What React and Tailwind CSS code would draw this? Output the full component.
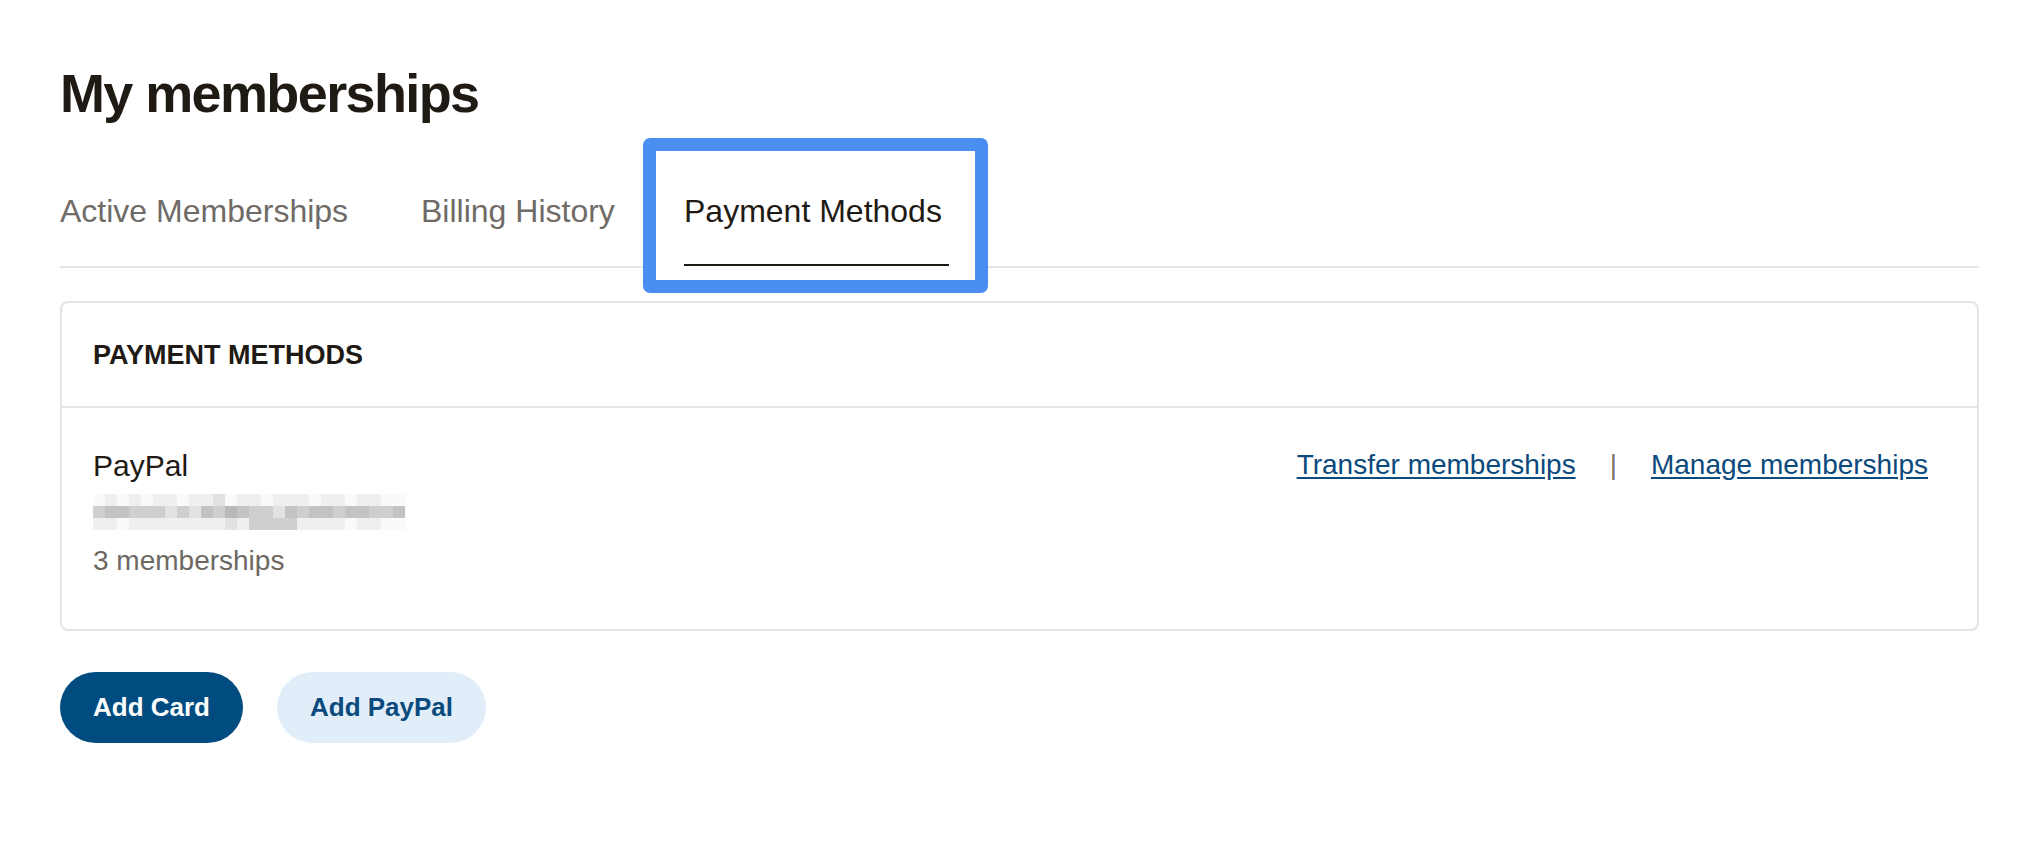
const shade = {
  a: "bg-[#fafafa]",
  b: "bg-[#efefef]",
  c: "bg-[#e2e2e2]",
  d: "bg-[#cfcfcf]",
  e: "bg-[#c3c3c3]",
  f: "bg-[#b8b8b8]",
};

// pixelated (redacted) e-mail line
const blurRows = [
  "abababbabbcabbabbbabbabbaa",
  "deedddcdcedfeddcedeedeedde",
  "bbabbbbbbbbcbddddbbbbabbaa",
];

function Redacted() {
  return (
    <div className="mt-[10px] flex flex-col">
      {blurRows.map((row, i) => (
        <div key={i} className="flex">
          {row.split("").map((c, j) => (
            <div key={j} className={`h-[12px] w-[12px] ${shade[c]}`} />
          ))}
        </div>
      ))}
    </div>
  );
}

function Tab({ label, width }) {
  return (
    <div className={width}>
      <div className="pb-[33px] border-b-2 border-transparent text-[32px] leading-[40px] text-[#6f6b66]">
        {label}
      </div>
    </div>
  );
}

export default function App() {
  return (
    <div className="min-h-[846px] bg-white pl-[60px] pr-[45px] pt-[61px] font-['Liberation_Sans',Arial,sans-serif]">
      <h1 className="text-[54px] leading-[64px] font-bold tracking-[-0.03em] text-[#1f1a13]">
        My memberships
      </h1>

      {/* Tabs */}
      <div className="mt-[66px] flex gap-[64px] border-b-2 border-[#e4e4e2]">
        <Tab label="Active Memberships" width="w-[297px]" />
        <Tab label="Billing History" width="w-[199px]" />
        <div className="relative w-[265px]">
          <span className="absolute -left-[41px] -right-[39px] -top-[53px] -bottom-[27px] rounded-[7px] border-[13px] border-[#4b8ef2] bg-white" />
          <div className="relative pb-[33px] border-b-2 border-[#1f1a13] text-[32px] leading-[40px] text-[#1f1a13]">
            Payment Methods
          </div>
        </div>
      </div>

      {/* Card */}
      <div className="mt-[33px] rounded-[8px] border-2 border-[#e4e4e2]">
        <div className="flex h-[105px] items-center border-b-2 border-[#e4e4e2] px-[31px]">
          <h2 className="text-[27px] leading-[32px] font-bold uppercase text-[#1f1a13]">Payment Methods</h2>
        </div>
        <div className="flex items-start justify-between pl-[31px] pr-[49px] pt-[40px] pb-[51px]">
          <div className="flex flex-col">
            <div className="text-[30px] leading-[36px] text-[#1f1a13]">PayPal</div>
            <Redacted />
            <div className="mt-[14px] text-[28px] leading-[34px] text-[#6d6862]">3 memberships</div>
          </div>
          <div className="flex items-center text-[28px] leading-[34px]">
            <a href="#" className="text-[#0b4a7c] underline underline-offset-[3px]">Transfer memberships</a>
            <span className="mx-[34px] text-[#77726c]">|</span>
            <a href="#" className="text-[#0b4a7c] underline underline-offset-[3px]">Manage memberships</a>
          </div>
        </div>
      </div>

      {/* Actions */}
      <div className="mt-[41px] flex gap-[34px]">
        <button className="h-[71px] rounded-full bg-[#004c80] px-[33px] text-[26px] font-bold text-white">
          Add Card
        </button>
        <button className="h-[71px] rounded-full bg-[#e1eefa] px-[33px] text-[26px] font-bold text-[#0b4a7c]">
          Add PayPal
        </button>
      </div>
    </div>
  );
}
